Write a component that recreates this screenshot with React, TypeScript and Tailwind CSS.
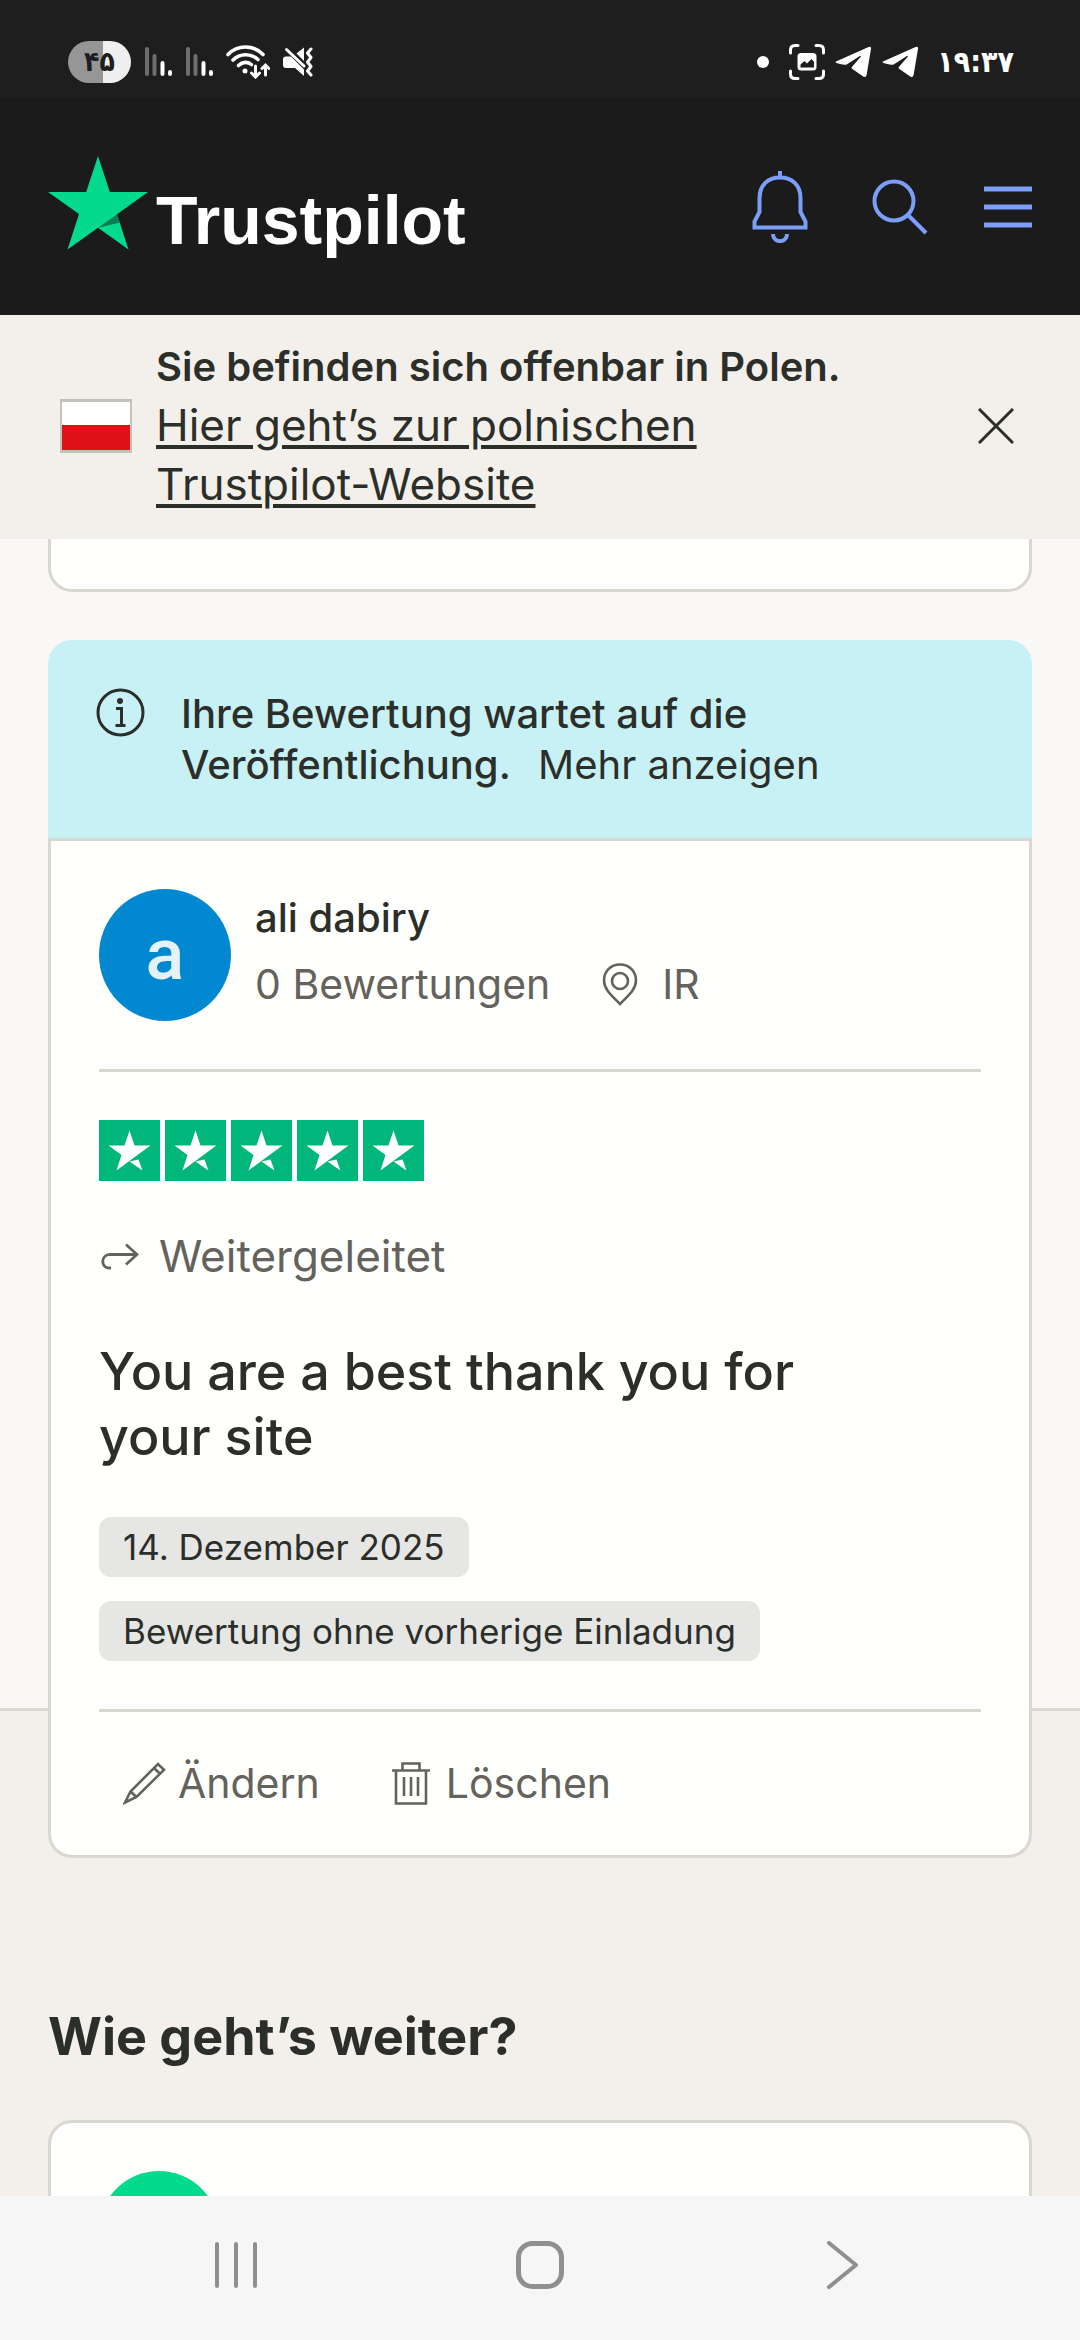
import type { ReactNode } from "react";

const STAR_COUNT = 5;

function SignalBars() {
  return (
    <svg width="28" height="30" viewBox="0 0 28 30" strokeWidth="4" strokeLinecap="round" aria-hidden="true">
      <path d="M3 2v25M10.500 9v18" stroke="#6e6e6e" />
      <path d="M18.500 16v11M26 25v2" stroke="#fff" />
    </svg>
  );
}

function WifiIcon() {
  return (
    <svg width="44" height="34" viewBox="0 0 44 34" fill="none" stroke="#fff" strokeWidth="3.600" strokeLinecap="round" aria-hidden="true">
      <path d="M2 9.500C11.500-.5 27.500-.5 37 9.500" />
      <path d="M7 15c7-7 18-7 25-.5" />
      <path d="M12.500 20.500c4-4 9.500-4 13 -1" />
      <circle cx="19" cy="26" r="2.500" fill="#fff" stroke="none" />
      <path d="M29.500 21v10M25.500 28l4 4 4-4M39.500 30V20.500M36 23.500l3.500-3.500 3.500 3.500" strokeWidth="3" />
    </svg>
  );
}

function MutedIcon() {
  return (
    <svg width="30" height="30" viewBox="0 0 30 30" aria-hidden="true">
      <path d="M13.500 6.500 21 .5V14z" fill="#fff" />
      <path d="M3 9.500h5L21 22.500V29l-9-8H3Q0 21 0 18v-5.500Q0 9.500 3 9.500z" fill="#fff" />
      <path d="M3.500 2.500 21 19" stroke="#fff" strokeWidth="3" strokeLinecap="round" />
      <path d="M28 2l-3.500 4 3.500 4.500-3.500 4.500 3.500 4.500-3.500 4.500 3.500 4" fill="none" stroke="#fff" strokeWidth="3" strokeLinecap="round" strokeLinejoin="round" />
    </svg>
  );
}

function CaptureIcon() {
  return (
    <svg width="36" height="36" viewBox="0 0 36 36" aria-hidden="true">
      <path d="M1.500 9V6Q1.500 1.500 6 1.500h3M27 1.500h3q4.500 0 4.500 4.500v3M34.500 27v3q0 4.500-4.500 4.500h-3M9 34.500H6q-4.500 0-4.500-4.500v-3" fill="none" stroke="#fff" strokeWidth="3" strokeLinecap="round" />
      <rect x="8.500" y="9" width="19" height="17.500" rx="3.500" fill="#fff" />
      <path d="M11.500 23.500v-3l4-3.500 2.500 2.500 4.500-4.500 2.500 3v5.500z" fill="#1c1c1c" />
    </svg>
  );
}

function TelegramIcon() {
  return (
    <svg width="37" height="32" viewBox="0 0 38 32" aria-hidden="true">
      <path d="M1 15.500 34.500.5q3-1 2.500 2L32.500 29q-.8 3.500-3.500 1.800L17.500 23q-1-1 0-2L26.500 10.500q.3-1.200-1-.7L12 18.500Q9 19.500 1.500 17q-1.500-.7-.5-1.500z" fill="#fff" />
    </svg>
  );
}

function StatusBar() {
  return (
    <div className="flex h-[98px] shrink-0 items-center justify-between bg-[#1e1e1e] pt-[26px] pr-[66px] pl-[68px] font-['DejaVu_Sans_Condensed','DejaVu_Sans',sans-serif] text-white">
      <div className="flex items-center gap-[13px]">
        <span className="flex h-[42px] w-[63px] items-center justify-center rounded-full bg-linear-to-r from-[#969696] from-55% to-[#efefef] to-55% text-[28px] leading-9 font-bold text-[#1e1e1e]">
          ۴۵
        </span>
        <SignalBars />
        <SignalBars />
        <WifiIcon />
        <MutedIcon />
      </div>
      <div className="flex items-center gap-[10px]">
        <span className="mr-[10px] size-3 rounded-full bg-white" />
        <CaptureIcon />
        <TelegramIcon />
        <TelegramIcon />
        <span className="ml-2 text-[30px] leading-9 font-bold">۱۹:۳۷</span>
      </div>
    </div>
  );
}

function IconButton({ label, children }: { label: string; children: ReactNode }) {
  return (
    <button type="button" aria-label={label} className="shrink-0">
      {children}
    </button>
  );
}

function Header() {
  return (
    <header className="flex h-[217px] shrink-0 items-center justify-between bg-[#1b1b1b] px-12">
      <a href="#" className="flex items-end gap-2 pb-2 text-white">
        <svg width="100" height="94" viewBox="0 0 100 94" aria-hidden="true">
          <path d="M50 0 61.800 36H100L69 58.300 80.500 93.500 50 71.700 19.500 93.500 31 58 0 36h38.200z" fill="#04da8d" />
          <path d="M69 58.300 50 71.700 72 66.500z" fill="#0b7a57" />
        </svg>
        <span className="font-['Liberation_Sans',sans-serif] text-[68px] leading-[60px] font-bold">Trustpilot</span>
      </a>
      <div className="flex items-center gap-[54px] text-[#7b9ef8]">
        <IconButton label="Benachrichtigungen">
          <svg width="72" height="72" viewBox="0 0 72 72" fill="none" stroke="currentColor" strokeWidth="4" aria-hidden="true">
            <path d="M36 0v6M15.500 27C15.500 14 24 6.500 36 6.500S56.500 14 56.500 27v14l5 9.500V56.500h-51V50.500l5-9.500z" />
            <path d="M29 63c0 9.500 14 9.500 14 0" />
          </svg>
        </IconButton>
        <IconButton label="Suche">
          <svg width="60" height="60" viewBox="0 0 60 60" fill="none" stroke="currentColor" strokeWidth="4" aria-hidden="true">
            <circle cx="24" cy="24" r="19.500" />
            <path d="m38 38 18 18" />
          </svg>
        </IconButton>
        <IconButton label="Menü">
          <svg width="48" height="42" viewBox="0 0 48 42" stroke="currentColor" strokeWidth="5" aria-hidden="true">
            <path d="M0 3h48M0 21h48M0 39h48" />
          </svg>
        </IconButton>
      </div>
    </header>
  );
}

function CountryBanner() {
  return (
    <div className="flex shrink-0 items-center bg-[#f3f0eb] pt-[22px] pr-[66px] pb-[25px] pl-[60px]">
      <svg className="mr-6 shrink-0" width="72" height="54" viewBox="0 0 72 54" aria-hidden="true">
        <rect width="72" height="54" fill="#c4c1bd" />
        <rect x="2" y="3" width="68" height="23" fill="#fff" />
        <rect x="2" y="26" width="68" height="25" fill="#e01118" />
      </svg>
      <div className="flex-1 leading-[59px]">
        <strong className="block text-[40px] font-semibold">Sie befinden sich offenbar in Polen.</strong>
        <a href="#" className="block max-w-[600px] text-[44px] underline decoration-4 underline-offset-4">
          Hier geht’s zur polnischen Trustpilot-Website
        </a>
      </div>
      <IconButton label="Schließen">
        <svg width="36" height="36" viewBox="0 0 36 36" stroke="currentColor" strokeWidth="3" aria-hidden="true">
          <path d="m1 1 34 34M35 1 1 35" />
        </svg>
      </IconButton>
    </div>
  );
}

function StarRating() {
  return (
    <div role="img" aria-label="5 von 5 Sternen" className="flex gap-[5px]">
      {Array.from({ length: STAR_COUNT }, (_, i) => (
        <svg key={i} width="61" height="61" viewBox="0 0 61 61" aria-hidden="true">
          <rect width="61" height="61" fill="#00b67a" />
          <path d="M30.500 10.500 35.500 25.500H51.500L38.500 35 17.500 50.500 22.500 35 9.500 25.500h16z" fill="#fff" />
          <path d="M30.500 41.500 39.500 39.500 43.500 50.500z" fill="#fff" />
        </svg>
      ))}
    </div>
  );
}

function Chip({ children }: { children: ReactNode }) {
  return <span className="rounded-xl bg-[#e6e6e5] px-6 text-[35px] leading-[60px]">{children}</span>;
}

function ReviewCard() {
  return (
    <article>
      <div className="flex items-start gap-9 rounded-t-3xl bg-[#c8f1f5] p-12">
        <svg className="shrink-0" width="49" height="49" viewBox="0 0 49 49" fill="none" stroke="currentColor" strokeWidth="3" aria-hidden="true">
          <circle cx="24.500" cy="24.500" r="22.500" />
          <circle cx="24" cy="13" r="3" fill="currentColor" stroke="none" />
          <path d="M20 20.500h5.500V37M19.500 37.500h10" />
        </svg>
        <p className="max-w-[680px] text-[40px] leading-[51px]">
          <strong className="mr-4 font-medium">Ihre Bewertung wartet auf die Veröffentlichung.</strong>{" "}
          <a href="#">Mehr anzeigen</a>
        </p>
      </div>

      <div className="rounded-b-3xl border-[3px] border-[#dad6d0] bg-[#fffffd] px-12">
        {/* Author */}
        <div className="flex gap-6 border-b-[3px] border-[#dad6d0] py-12">
          <span className="flex size-[132px] shrink-0 items-center justify-center rounded-full bg-[#0288d1] font-['Roboto',sans-serif] text-7xl font-medium text-[#e4f3fb]">
            a
          </span>
          <div className="flex flex-col gap-4 pt-[3px] leading-[51px]">
            <a href="#" className="text-[40px] font-medium">ali dabiry</a>
            <div className="flex items-center gap-[52px] text-[41px] text-[#63625c]">
              <span>0 Bewertungen</span>
              <span className="flex items-center gap-6">
                <svg width="36" height="43" viewBox="0 0 36 43" fill="none" stroke="currentColor" strokeWidth="2.600" aria-hidden="true">
                  <path d="M18 1.500c9.500 0 16 7 16 16C34 27 25 33.500 18 41 11 33.500 2 27 2 17.500c0-9 6.500-16 16-16z" />
                  <circle cx="18" cy="18" r="8" />
                </svg>
                IR
              </span>
            </div>
          </div>
        </div>

        {/* Review */}
        <div className="flex flex-col items-start border-b-[3px] border-[#dad6d0] py-12">
          <StarRating />
          <span className="mt-[46px] flex items-center gap-5 text-[44px] leading-[59px] text-[#63625c]">
            <svg width="40" height="27" viewBox="0 0 40 27" fill="none" stroke="currentColor" strokeWidth="2.800" aria-hidden="true">
              <path d="M12 25H10C1.500 25 1.500 11.500 11 11.500H37.500M27 1.500l11 10-11 10" />
            </svg>
            Weitergeleitet
          </span>
          <h2 className="mt-[53px] max-w-[740px] text-[52px] leading-[65px] font-medium">
            You are a best thank you for your site
          </h2>
          <div className="mt-12 flex flex-col items-start gap-6">
            <Chip>14. Dezember 2025</Chip>
            <Chip>Bewertung ohne vorherige Einladung</Chip>
          </div>
        </div>

        <div className="flex gap-6 py-[46px] text-[41px] leading-[51px] text-[#63625c]">
          <button type="button" className="flex items-center gap-3 px-6">
            <svg width="43" height="43" viewBox="0 0 43 43" fill="none" stroke="currentColor" strokeWidth="2.600" aria-hidden="true">
              <path d="M2 40.500 7.500 29.500 35 2l6 5.800L13.500 35zM7.500 29.500l6 5.500M31 6l6 5.800" />
            </svg>
            Ändern
          </button>
          <button type="button" className="flex items-center gap-4 px-6">
            <svg width="38" height="43" viewBox="0 0 38 43" fill="none" stroke="currentColor" strokeWidth="2.600" aria-hidden="true">
              <path d="M0 8.500h38M4 8.500v33h30v-33M10.500 8.500v-7h17v7M12 15v19M19 15v19M26 15v19" />
            </svg>
            Löschen
          </button>
        </div>
      </div>
    </article>
  );
}

function NavigationBar() {
  return (
    <nav className="flex h-36 shrink-0 items-center justify-around bg-[#f6f6f6] px-[84px] pb-[6px] text-[#8f8f8f]">
      <IconButton label="Letzte Apps">
        <svg width="48" height="48" viewBox="0 0 48 48" stroke="currentColor" strokeWidth="4" strokeLinecap="round" aria-hidden="true">
          <path d="M5 3v42M24 3v42M43 3v42" />
        </svg>
      </IconButton>
      <IconButton label="Startbildschirm">
        <svg width="48" height="48" viewBox="0 0 48 48" fill="none" stroke="currentColor" strokeWidth="5" aria-hidden="true">
          <rect x="2.500" y="2.500" width="43" height="43" rx="14" />
        </svg>
      </IconButton>
      <IconButton label="Zurück">
        <svg width="48" height="48" viewBox="0 0 48 48" fill="none" stroke="currentColor" strokeWidth="4" strokeLinecap="round" strokeLinejoin="round" aria-hidden="true">
          <path d="M9 2l27 22L9 46" />
        </svg>
      </IconButton>
    </nav>
  );
}

export default function App() {
  return (
    <div className="flex h-screen flex-col overflow-hidden bg-[#f9f8f5] font-['Inter',sans-serif] text-[#2c2f29]">
      <StatusBar />
      <Header />
      <CountryBanner />

      <main className="flex min-h-0 flex-1 flex-col overflow-hidden">
        <section className="relative z-10 shrink-0 px-12">
          <div className="mb-12 h-[53px] rounded-b-3xl border-[3px] border-t-0 border-[#dad6d0] bg-[#fffffd]" />
          <ReviewCard />
        </section>

        {/* Next steps, tucked under the end of the review card */}
        <section className="-mt-[150px] shrink-0 border-t-[3px] border-[#dad6d0] bg-[#f3f0eb] px-12 pt-[293px]">
          <h2 className="text-[52px] leading-[65px] font-bold">Wie geht’s weiter?</h2>
          <div className="mt-[51px] h-60 rounded-3xl border-[3px] border-[#dad6d0] bg-[#fffffd] p-12">
            <div className="size-[120px] rounded-full bg-[#04da8d]" />
          </div>
        </section>
      </main>

      <NavigationBar />
    </div>
  );
}
